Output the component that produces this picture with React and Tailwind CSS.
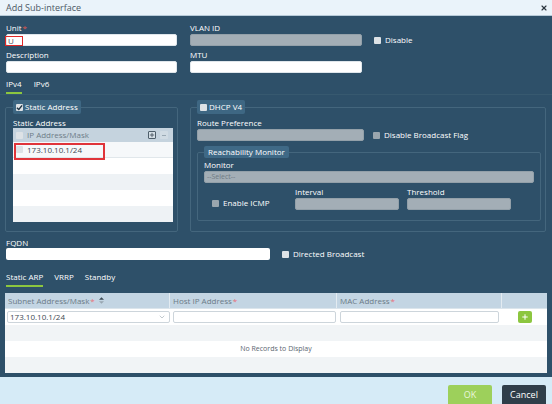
import { ChevronDown, Plus, X } from "lucide-react";

function Box({ checked, dim }) {
  return (
    <span
      className={`inline-flex items-center justify-center w-[7px] h-[7px] rounded-[1px] shrink-0 ${
        dim ? "bg-[#9aa6ae]" : "bg-[#dde2e6]"
      }`}
    >
      {checked && (
        <svg viewBox="0 0 8 8" className="w-[7px] h-[7px]">
          <path d="M1 4.2 L3.2 6.3 L7 1.5" stroke="#1f3444" strokeWidth="1.6" fill="none" />
        </svg>
      )}
    </span>
  );
}

function Field({ label, req, gray, w = "w-[171px]", className = "" }) {
  return (
    <div className={className}>
      <div className="h-[12px] leading-[12px] text-[8px] text-white">
        {label}
        {req && <span className="text-[#e2574c] ml-[1px]">*</span>}
      </div>
      <div
        className={`${w} h-[12px] rounded-[2px] ${
          gray ? "bg-[#a3aeb6] border border-[#93a0a9]" : "bg-white border border-[#dfe6eb]"
        }`}
      />
    </div>
  );
}

export default function App() {
  return (
    <div className="w-[552px] h-[404px] overflow-hidden font-['Open_Sans',sans-serif] bg-[#2e5069]">
      {/* title */}
      <div className="h-[16px] bg-[#eaf3fa] border-b border-[#b7cad8] flex items-center justify-between pl-[6px] pr-[4px]">
        <span className="text-[9px] text-[#4b5865]">Add Sub-interface</span>
        <X className="w-[8px] h-[8px] text-[#2b3640]" strokeWidth={3.5} />
      </div>

      <div className="px-[6px] pt-[6px]">
        {/* top fields */}
        <div className="flex gap-[13px]">
          <div className="relative">
            <Field label="Unit" req />
            <div className="absolute left-[-1px] top-[14px] w-[18px] h-[10px] border border-[#e02828]" />
            <span className="absolute left-[2px] top-[13px] text-[8px] leading-[12px] text-[#556]">U</span>
            <Field label="Description" className="mt-[3px]" />
          </div>
          <div>
            <div className="flex items-end gap-[12px]">
              <Field label="VLAN ID" gray w="w-[172px]" />
              <div className="flex items-center gap-[4px] h-[12px]">
                <Box />
                <span className="text-[8px] text-white">Disable</span>
              </div>
            </div>
            <Field label="MTU" w="w-[172px]" className="mt-[3px]" />
          </div>
        </div>

        {/* tabs 1 */}
        <div className="flex gap-[12px] mt-[5px] text-[8px] text-white">
          <div className="leading-[12px] pb-[2px] border-b-2 border-[#8cc63f]">IPv4</div>
          <div className="leading-[12px] pb-[2px] border-b-2 border-transparent">IPv6</div>
        </div>
        <div className="-mx-[6px] border-t border-[#37596f]" />

        {/* groups */}
        <div className="flex gap-[12px] mt-[5px] -ml-[1px]">
          <fieldset className="w-[173px] border border-[#44667d] rounded-[2px] pl-[7px] pr-[4px] pb-[9px]">
            <legend className="h-[14px] px-[3px] flex items-center gap-[2px] bg-[#3e6783] rounded-[2px] text-[8px] text-white">
              <Box checked />
              Static Address
            </legend>
            <div className="pt-[4px] h-[14px] leading-[10px] text-[8px] text-white">Static Address</div>
            <div className="relative bg-white">
              <div className="h-[14px] bg-[#c5d3de] flex items-center pl-[3px] pr-[5px] gap-[4px]">
                <Box />
                <span className="text-[8px] text-[#6e7d88] flex-1">IP Address/Mask</span>
                <span className="w-[8px] h-[8px] border border-[#4f5f6b] rounded-[1px] flex items-center justify-center bg-[#d5dfe6]">
                  <Plus className="w-[6px] h-[6px] text-[#33424d]" strokeWidth={3} />
                </span>
                <span className="w-[8px] h-[8px] bg-[#d0dbe3] rounded-[1px] flex items-center justify-center">
                  <span className="w-[4px] h-[1px] bg-[#9aa9b4]" />
                </span>
              </div>
              <div className="h-[16px] bg-[#f6f8fa] border-b border-[#e1e7eb] flex items-center pl-[3px] gap-[4px]">
                <Box />
                <span className="text-[8px] text-[#3c4852]">173.10.10.1/24</span>
              </div>
              <div className="h-[16px] bg-white" />
              <div className="h-[16px] bg-[#eef2f5]" />
              <div className="h-[16px] bg-white" />
              <div className="h-[16px] bg-[#eef2f5]" />
              <div className="absolute left-[1px] top-[15px] w-[91px] h-[17px] border-2 border-[#e0343a]" />
            </div>
          </fieldset>

          <fieldset className="w-[356px] border border-[#44667d] rounded-[2px] pl-[6px] pr-[4px] pb-[8px]">
            <legend className="h-[14px] px-[3px] flex items-center gap-[2px] bg-[#3e6783] rounded-[2px] text-[8px] text-white">
              <Box />
              DHCP V4
            </legend>
            <div className="flex items-end gap-[9px] pt-[3px]">
              <Field label="Route Preference" gray w="w-[167px]" />
              <div className="flex items-center gap-[4px] h-[12px]">
                <Box dim />
                <span className="text-[8px] text-white">Disable Broadcast Flag</span>
              </div>
            </div>
            <fieldset className="mt-[5px] border border-[#44667d] rounded-[2px] pl-[6px] pr-[6px] pb-[10px]">
              <legend className="h-[12px] px-[4px] flex items-center bg-[#3f6986] rounded-[2px] text-[8px] text-white">
                Reachability Monitor
              </legend>
              <div className="pt-[1px]">
                <div className="h-[12px] leading-[12px] text-[8px] text-white">Monitor</div>
                <div className="h-[12px] rounded-[2px] bg-[#a3aeb6] border border-[#93a0a9] flex items-center pl-[2px] text-[7px] text-[#6f7b84]">
                  --Select--
                </div>
              </div>
              <div className="flex items-end mt-[4px]">
                <div className="w-[91px] pl-[8px] flex items-center gap-[4px] h-[14px]">
                  <Box dim />
                  <span className="text-[8px] text-white">Enable ICMP</span>
                </div>
                <div>
                  <div className="h-[11px] leading-[10px] text-[8px] text-white">Interval</div>
                  <div className="w-[104px] h-[12px] rounded-[2px] bg-[#a3aeb6] border border-[#93a0a9]" />
                </div>
                <div className="ml-[8px]">
                  <div className="h-[11px] leading-[10px] text-[8px] text-white">Threshold</div>
                  <div className="w-[104px] h-[12px] rounded-[2px] bg-[#a3aeb6] border border-[#93a0a9]" />
                </div>
              </div>
            </fieldset>
          </fieldset>
        </div>

        {/* FQDN */}
        <div className="flex items-end gap-[12px] mt-[6px]">
          <div>
            <div className="h-[10px] leading-[10px] text-[8px] text-white">FQDN</div>
            <div className="w-[264px] h-[12px] rounded-[2px] bg-white" />
          </div>
          <div className="flex items-center gap-[4px] h-[12px]">
            <Box />
            <span className="text-[8px] text-white">Directed Broadcast</span>
          </div>
        </div>

        {/* tabs 2 */}
        <div className="flex gap-[11px] mt-[11px] text-[8px] text-white">
          <div className="leading-[12px] pb-[2px] border-b-2 border-[#8cc63f]">Static ARP</div>
          <div className="leading-[12px] pb-[2px] border-b-2 border-transparent">VRRP</div>
          <div className="leading-[12px] pb-[2px] border-b-2 border-transparent">Standby</div>
        </div>

        {/* ARP table */}
        <div className="mt-[6px] -ml-[1px] w-[542px] bg-white">
          <div className="h-[16px] bg-[#c3d5e3] flex text-[8px] text-[#6b7b87] border-b border-[#dbe5ec]">
            <div className="w-[165px] flex items-center pl-[3px] border-r border-[#e3ebf1]">
              Subnet Address/Mask<span className="text-[#e8707a] ml-[1px]">*</span>
              <svg viewBox="0 0 6 8" className="w-[5px] h-[7px] ml-[4px]">
                <path d="M3 0 L6 3 L0 3 Z" fill="#3c4a55" />
                <path d="M3 8 L6 5 L0 5 Z" fill="#98a6b1" />
              </svg>
            </div>
            <div className="w-[167px] flex items-center pl-[3px] border-r border-[#e3ebf1]">
              Host IP Address<span className="text-[#e8707a] ml-[1px]">*</span>
            </div>
            <div className="w-[165px] flex items-center pl-[3px] border-r border-[#e3ebf1]">
              MAC Address<span className="text-[#e8707a] ml-[1px]">*</span>
            </div>
            <div className="flex-1" />
          </div>
          <div className="h-[16px] flex items-center bg-white">
            <div className="w-[165px] pl-[2px]">
              <div className="h-[12px] rounded-[2px] border border-[#cdd5db] flex items-center justify-between pl-[2px] pr-[3px]">
                <span className="text-[8px] text-[#3c4852]">173.10.10.1/24</span>
                <ChevronDown className="w-[8px] h-[8px] text-[#a4afb7]" strokeWidth={2} />
              </div>
            </div>
            <div className="w-[167px] pl-[3px] pr-[1px]">
              <div className="h-[12px] rounded-[2px] border border-[#cdd5db]" />
            </div>
            <div className="w-[165px] pl-[3px] pr-[3px]">
              <div className="h-[12px] rounded-[2px] border border-[#cdd5db]" />
            </div>
            <div className="flex-1 flex justify-center">
              <span className="w-[14px] h-[12px] rounded-[2px] bg-[#8cc63f] flex items-center justify-center">
                <Plus className="w-[8px] h-[8px] text-white" strokeWidth={3} />
              </span>
            </div>
          </div>
          <div className="h-[16px] bg-[#f1f4f6]" />
          <div className="h-[16px] bg-white flex items-center justify-center text-[7px] text-[#5b6670]">
            No Records to Display
          </div>
          <div className="h-[16px] bg-[#f1f4f6]" />
        </div>
      </div>

      {/* footer */}
      <div className="mt-[4px] h-[30px] bg-[#d6ebf7] flex justify-end gap-[10px] pr-[6px] pt-[8px]">
        <div className="w-[44px] h-[22px] rounded-[2px] bg-[#9dd05b] flex items-start justify-center pt-[3px] text-[9px] text-[#e9f6dc]">
          OK
        </div>
        <div className="w-[44px] h-[22px] rounded-[2px] bg-[#2f3e4a] flex items-start justify-center pt-[3px] text-[9px] text-white">
          Cancel
        </div>
      </div>
    </div>
  );
}
